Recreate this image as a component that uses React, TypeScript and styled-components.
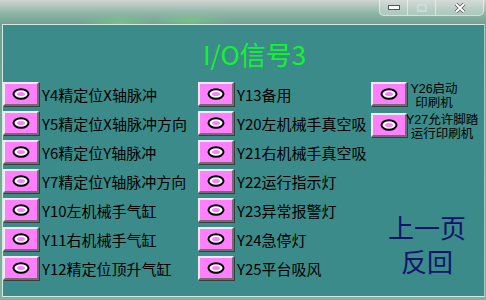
import styled, { createGlobalStyle } from "styled-components";

const GlobalStyle = createGlobalStyle`
  body {
    margin: 0;
    font-family: "Noto Sans CJK SC", "Liberation Sans", sans-serif;
  }
`;

const Window = styled.div`
  width: 486px;
  height: 300px;
  display: flex;
  flex-direction: column;
  background: linear-gradient(to bottom, #cfd6d2 0px, #93b8aa 12px, #6fa292 24px, #7fb0a0 100%);
  overflow: hidden;
`;

const TitleBar = styled.div`
  height: 24px;
  display: flex;
  justify-content: flex-end;
  align-items: flex-start;
  padding-right: 2px;
  background:
    radial-gradient(ellipse 40px 10px at 120px 24px, rgba(120, 220, 120, 0.5), transparent),
    radial-gradient(ellipse 40px 10px at 190px 22px, rgba(120, 220, 120, 0.45), transparent);
`;

const Controls = styled.div`
  display: flex;
  height: 15px;
  border: 1px solid rgba(255, 255, 255, 0.55);
  border-top: none;
  border-radius: 0 0 5px 5px;
  background: linear-gradient(to bottom, rgba(255, 255, 255, 0.15), rgba(255, 255, 255, 0.3));
`;

const CtrlButton = styled.div<{ w: number; last?: boolean }>`
  width: ${p => p.w}px;
  display: flex;
  align-items: center;
  justify-content: center;
  border-right: ${p => (p.last ? "none" : "1px solid rgba(255, 255, 255, 0.5)")};
`;

const Panel = styled.div`
  flex: 1;
  margin: 0 1px 3px 2px;
  border: 1px solid #d6e8e4;
  border-right-color: #a9c8c0;
  background: #3a8b89;
  display: flex;
  flex-direction: column;
`;

const Title = styled.div`
  height: 57px;
  display: flex;
  align-items: center;
  justify-content: center;
  padding-left: 22px;
  color: #14f42c;
  font-size: 26px;
`;

const Body = styled.div`
  display: flex;
  flex: 1;
`;

const Column = styled.div<{ w: number; gap: number }>`
  width: ${p => p.w}px;
  display: flex;
  flex-direction: column;
  gap: ${p => p.gap}px;
`;

const Row = styled.div`
  display: flex;
  align-items: center;
  height: 24px;
`;

const LampButton = styled.div`
  box-sizing: border-box;
  width: 36px;
  height: 24px;
  flex-shrink: 0;
  background: #ff80ff;
  border: 2px solid;
  border-color: #f4e8f4 #6e6e6e #6e6e6e #f4e8f4;
  box-shadow: 1px 1px 0 #3c3c3c;
  display: flex;
  align-items: center;
  justify-content: center;
`;

const Label = styled.span`
  margin-left: 3px;
  font-size: 15px;
  color: #000;
  white-space: nowrap;
`;

const SmallLabel = styled.div<{ w: number }>`
  width: ${p => p.w}px;
  margin-left: -1px;
  margin-top: 3px;
  font-family: "Liberation Sans", "Noto Sans CJK SC", sans-serif;
  font-size: 12.5px;
  line-height: 14px;
  text-align: center;
  color: #000;
  white-space: nowrap;
`;

const NavBlock = styled.div`
  margin-top: 66px;
  margin-left: 16px;
  display: flex;
  flex-direction: column;
  align-items: center;
  width: 80px;
  color: #12126c;
  font-size: 26px;
  line-height: 34px;
`;

const Lamp = () => (
  <svg width="18" height="12" viewBox="0 0 18 12">
    <ellipse cx="9" cy="6" rx="7.5" ry="4.8" fill="#fff" stroke="#000" strokeWidth="2" />
    <ellipse cx="9" cy="6" rx="4" ry="2" fill="#ff80ff" />
  </svg>
);

const col1 = [
  "Y4精定位X轴脉冲",
  "Y5精定位X轴脉冲方向",
  "Y6精定位Y轴脉冲",
  "Y7精定位Y轴脉冲方向",
  "Y10左机械手气缸",
  "Y11右机械手气缸",
  "Y12精定位顶升气缸",
];

const col2 = [
  "Y13备用",
  "Y20左机械手真空吸",
  "Y21右机械手真空吸",
  "Y22运行指示灯",
  "Y23异常报警灯",
  "Y24急停灯",
  "Y25平台吸风",
];

const col3 = [
  { lines: ["Y26启动", "印刷机"], w: 56 },
  { lines: ["Y27允许脚踏", "运行印刷机"], w: 72 },
];

export default function App() {
  return (
    <>
      <GlobalStyle />
      <Window>
        <TitleBar>
          <Controls>
            <CtrlButton w={27}>
              <svg width="12" height="6" viewBox="0 0 12 6">
                <rect x="0.5" y="0.5" width="11" height="4" fill="#fff" stroke="#555" strokeWidth="1" />
              </svg>
            </CtrlButton>
            <CtrlButton w={27}>
              <svg width="10" height="8" viewBox="0 0 10 8">
                <rect x="1" y="1" width="8" height="6" fill="none" stroke="#cfe0da" strokeWidth="1.5" />
              </svg>
            </CtrlButton>
            <CtrlButton w={47} last>
              <svg width="12" height="10" viewBox="0 0 12 10">
                <path d="M2 1 L10 9 M10 1 L2 9" stroke="#555" strokeWidth="3.5" />
                <path d="M2 1 L10 9 M10 1 L2 9" stroke="#fff" strokeWidth="2" />
              </svg>
            </CtrlButton>
          </Controls>
        </TitleBar>
        <Panel>
          <Title>I/O信号3</Title>
          <Body>
            <Column w={195} gap={5}>
              {col1.map(t => (
                <Row key={t}>
                  <LampButton>
                    <Lamp />
                  </LampButton>
                  <Label>{t}</Label>
                </Row>
              ))}
            </Column>
            <Column w={173} gap={5}>
              {col2.map(t => (
                <Row key={t}>
                  <LampButton>
                    <Lamp />
                  </LampButton>
                  <Label>{t}</Label>
                </Row>
              ))}
            </Column>
            <Column w={110} gap={7}>
              {col3.map(item => (
                <Row key={item.lines[0]}>
                  <LampButton>
                    <Lamp />
                  </LampButton>
                  <SmallLabel w={item.w}>
                    {item.lines.map(l => (
                      <div key={l}>{l}</div>
                    ))}
                  </SmallLabel>
                </Row>
              ))}
              <NavBlock>
                <div>上一页</div>
                <div>反回</div>
              </NavBlock>
            </Column>
          </Body>
        </Panel>
      </Window>
    </>
  );
}
